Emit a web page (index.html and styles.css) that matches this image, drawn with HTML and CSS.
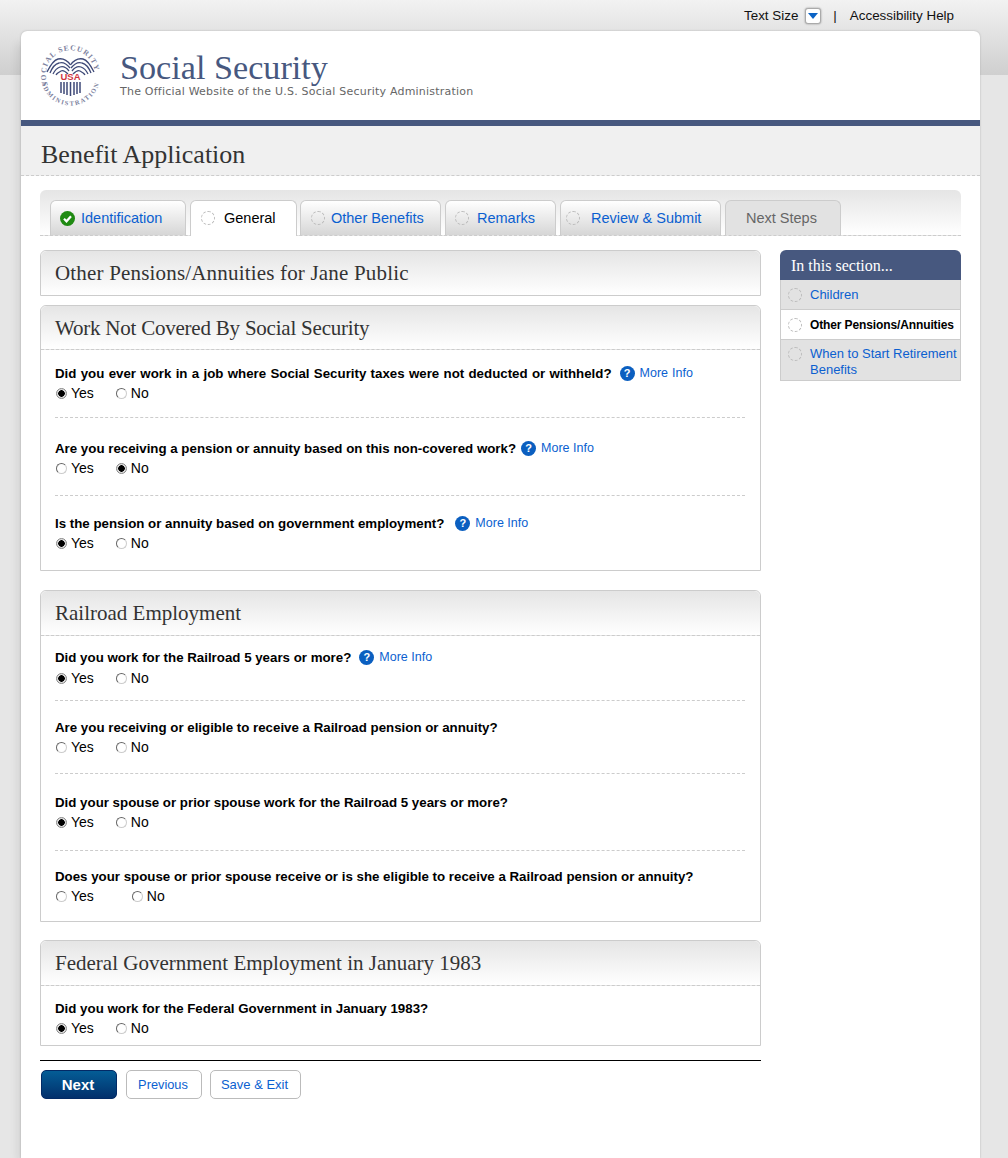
FILE: index.html
```html
<!DOCTYPE html>
<html lang="en" dir="ltr">
  <head>
    <meta charset="utf-8">
    <title>Benefit Application</title>
    <link rel="stylesheet" href="styles.css">
  </head>
  <body>
    <div class="Top-Links">
      <span>Text Size</span>
      <span class="Size-Btn"><svg width="10" height="6" viewBox="0 0 10 6"><path d="M0 0H10L5 6Z" fill="#0b63c5"/></svg></span>
      <span class="Top-Sep">|</span>
      <span>Accessibility Help</span>
    </div>
    <div class="Page-Card">
      <div class="Site-Header">
        <svg class="Site-Logo" width="63" height="63" viewBox="0 0 63 63">
          <defs>
            <path id="LogoTop" d="M9 41A24.6 24.6 0 1 1 56 31"/>
            <path id="LogoBottom" d="M2 32A29.5 29.5 0 0 0 61 32"/>
            <g id="LogoWing" fill="none" stroke="#3f4a78" stroke-width="1.3">
              <path d="M31.5 21C28 16 24 14 19 15C15 16 11 22 8 28"/>
              <path d="M31 24C27 19 23 18 20 19C16 20 13 24 11 29"/>
              <path d="M30 27C27 23 24 22 21 23C18 24 16 26 14 30"/>
              <path d="M29 30C26 27 24 26 22 27C20 28 18 29 17 31"/>
            </g>
          </defs>
          <text class="Logo-Text Logo-Top"><textPath href="#LogoTop">SOCIAL SECURITY</textPath></text>
          <text class="Logo-Text Logo-Bottom"><textPath href="#LogoBottom" startOffset="6">ADMINISTRATION</textPath></text>
          <use href="#LogoWing"/>
          <use href="#LogoWing" transform="translate(63 0) scale(-1 1)"/>
          <text class="Logo-Usa" x="31.5" y="36" text-anchor="middle">USA</text>
          <path d="M22 38V49M25 38V50M28 38V51M31.5 38V52M35 38V51M38 38V50M41 38V49" stroke="#3f4a78" stroke-width="1.5"/>
        </svg>
        <div class="Site-Title">
          <div class="Site-Name">Social Security</div>
          <div class="Site-Tag">The Official Website of the U.S. Social Security Administration</div>
        </div>
      </div>
      <div class="Page-Title">Benefit Application</div>
      <div class="Tab-Bar">
        <a class="Tab Tab-Id"><svg class="Tab-Icon" width="15" height="15" viewBox="0 0 15 15"><circle cx="7.5" cy="7.5" r="7.5" fill="#1f8a12"/><path d="M4 7.8L6.5 10.3L11 5.3" fill="none" stroke="#fff" stroke-width="2.2"/></svg>Identification</a>
        <a class="Tab Tab-Current"><span class="Dash-Circle"></span>General</a>
        <a class="Tab Tab-Benefits"><span class="Dash-Circle"></span>Other Benefits</a>
        <a class="Tab Tab-Remarks"><span class="Dash-Circle"></span>Remarks</a>
        <a class="Tab Tab-Review"><span class="Dash-Circle"></span>Review &amp; Submit</a>
        <a class="Tab Tab-Off">Next Steps</a>
      </div>
      <div class="Page-Body">
        <div class="Main-Col">
          <div class="Panel Panel-Title"><h2>Other Pensions/Annuities for Jane Public</h2></div>

          <div class="Panel Panel-Work">
            <h2>Work Not Covered By Social Security</h2>
            <div class="Question">
              <div class="Q-Text">Did you ever work in a job where Social Security taxes were not deducted or withheld?<span class="Help-Icon Help-Far">?</span><a class="More-Info">More Info</a></div>
              <div class="Q-Radios"><label><input type="radio" name="q1" checked>Yes</label><label><input type="radio" name="q1">No</label></div>
            </div>
            <div class="Question">
              <div class="Q-Text">Are you receiving a pension or annuity based on this non-covered work?<span class="Help-Icon">?</span><a class="More-Info">More Info</a></div>
              <div class="Q-Radios"><label><input type="radio" name="q2">Yes</label><label><input type="radio" name="q2" checked>No</label></div>
            </div>
            <div class="Question">
              <div class="Q-Text">Is the pension or annuity based on government employment?<span class="Help-Icon Help-Wide">?</span><a class="More-Info">More Info</a></div>
              <div class="Q-Radios"><label><input type="radio" name="q3" checked>Yes</label><label><input type="radio" name="q3">No</label></div>
            </div>
          </div>

          <div class="Panel Panel-Rail">
            <h2>Railroad Employment</h2>
            <div class="Question">
              <div class="Q-Text">Did you work for the Railroad 5 years or more?<span class="Help-Icon Help-Far">?</span><a class="More-Info">More Info</a></div>
              <div class="Q-Radios"><label><input type="radio" name="q4" checked>Yes</label><label><input type="radio" name="q4">No</label></div>
            </div>
            <div class="Question">
              <div class="Q-Text">Are you receiving or eligible to receive a Railroad pension or annuity?</div>
              <div class="Q-Radios"><label><input type="radio" name="q5">Yes</label><label><input type="radio" name="q5">No</label></div>
            </div>
            <div class="Question">
              <div class="Q-Text">Did your spouse or prior spouse work for the Railroad 5 years or more?</div>
              <div class="Q-Radios"><label><input type="radio" name="q6" checked>Yes</label><label><input type="radio" name="q6">No</label></div>
            </div>
            <div class="Question">
              <div class="Q-Text">Does your spouse or prior spouse receive or is she eligible to receive a Railroad pension or annuity?</div>
              <div class="Q-Radios Q-Radios-Wide"><label><input type="radio" name="q7">Yes</label><label><input type="radio" name="q7">No</label></div>
            </div>
          </div>

          <div class="Panel Panel-Fed">
            <h2>Federal Government Employment in January 1983</h2>
            <div class="Question">
              <div class="Q-Text">Did you work for the Federal Government in January 1983?</div>
              <div class="Q-Radios"><label><input type="radio" name="q8" checked>Yes</label><label><input type="radio" name="q8">No</label></div>
            </div>
          </div>

          <div class="Btn-Container">
            <a class="Btn Btn-Next">Next</a>
            <a class="Btn Btn-Prev">Previous</a>
            <a class="Btn Btn-Save">Save &amp; Exit</a>
          </div>
        </div>
        <div class="Side-Col">
          <div class="Side-Head">In this section...</div>
          <a class="Side-Item"><span class="Dash-Circle"></span><span>Children</span></a>
          <a class="Side-Item Side-Current"><span class="Dash-Circle"></span><span>Other Pensions/Annuities</span></a>
          <a class="Side-Item Side-Tall"><span class="Dash-Circle"></span><span>When to Start Retirement Benefits</span></a>
        </div>
      </div>
    </div>
  </body>
</html>
```

FILE: styles.css
```css
html {
  height: 100%;
}

body {
  margin: 0;
  padding: 0 28px 0 21px;
  height: 1158px;
  box-sizing: border-box;
  overflow: hidden;
  font-family: 'Liberation Sans', Arial, sans-serif;
  font-size: 14px;
  color: #000;
  background: linear-gradient(#f2f2f2 0, #cfcfcf 75px, #e6e6e6 75px, #e6e6e6 100%);
}

a {
  color: #0b5fd0;
}

.Top-Links {
  display: flex;
  justify-content: flex-end;
  align-items: center;
  height: 31px;
  padding-right: 26px;
  font-size: 13.4px;
  color: #111;
}

.Size-Btn {
  display: flex;
  align-items: center;
  justify-content: center;
  width: 14px;
  height: 14px;
  margin-left: 7px;
  background: #fff;
  border: 1px solid #aaa;
  border-radius: 3px;
  box-shadow: 0 0 2px #888;
}

.Top-Sep {
  margin: 0 13px 0 12px;
}

.Page-Card {
  height: 1127px;
  background: #fff;
  border-radius: 6px 6px 0 0;
  box-shadow: -8px 8px 8px -4px rgba(0, 0, 0, 0.08), 0 0 2px #aaa;
}

.Site-Header {
  display: flex;
  height: 89px;
  box-sizing: border-box;
  padding: 13px 0 0 18px;
}

.Site-Logo {
  flex: none;
  overflow: visible;
}

.Logo-Text {
  font-family: 'Liberation Serif', serif;
  font-weight: bold;
  fill: #7d82a0;
}

.Logo-Top {
  font-size: 7.5px;
  letter-spacing: 1px;
}

.Logo-Bottom {
  font-size: 6.5px;
  letter-spacing: 1.5px;
}

.Logo-Usa {
  font-family: 'Liberation Sans', sans-serif;
  font-weight: bold;
  font-size: 9.5px;
  fill: #d0343f;
}

.Site-Title {
  margin-left: 18px;
}

.Site-Name {
  font-family: 'Liberation Serif', serif;
  font-size: 34.2px;
  line-height: 34px;
  margin-top: 7px;
  color: #47587f;
}

.Site-Tag {
  font-family: 'DejaVu Sans', sans-serif;
  font-size: 11px;
  line-height: 12px;
  margin-top: 1px;
  letter-spacing: 0.22px;
  color: #666;
}

.Page-Title {
  height: 56px;
  box-sizing: border-box;
  padding: 14px 0 0 20px;
  border-top: 6px solid #47587f;
  border-bottom: 1px dashed #ccc;
  background: #f0f0f0;
  font-family: 'Liberation Serif', serif;
  font-size: 26px;
  line-height: 30px;
  color: #333;
}

.Tab-Bar {
  display: flex;
  gap: 4px;
  height: 46px;
  box-sizing: border-box;
  margin: 14px 19px 0 19px;
  padding: 10px 0 0 10px;
  border-bottom: 1px dashed #ccc;
  border-radius: 6px 6px 0 0;
  background: linear-gradient(#e5e5e5, #fff);
}

.Tab {
  display: flex;
  align-items: center;
  height: 35px;
  box-sizing: border-box;
  border: 1px solid #ccc;
  border-bottom: 0;
  border-radius: 6px 6px 0 0;
  background: linear-gradient(#fff, #d6d6d6);
  font-size: 14.5px;
  color: #0b5fd0;
}

.Tab-Icon {
  margin-right: 6px;
}

.Dash-Circle {
  flex: none;
  display: block;
  width: 12px;
  height: 12px;
  border: 1px dashed #bbb;
  border-radius: 50%;
}

.Tab-Id {
  width: 136px;
  padding-left: 9px;
}

.Tab-Current {
  width: 107px;
  height: 36px;
  margin-right: -1px;
  padding: 0 0 1px 10px;
  background: #fff;
  color: #000;
}

.Tab-Current .Dash-Circle {
  margin-right: 9px;
}

.Tab-Benefits {
  width: 141px;
  padding-left: 10px;
}

.Tab-Benefits .Dash-Circle {
  margin-right: 6px;
}

.Tab-Remarks {
  width: 111px;
  padding-left: 9px;
}

.Tab-Remarks .Dash-Circle {
  margin-right: 8px;
}

.Tab-Review {
  width: 161px;
  padding-left: 5px;
}

.Tab-Review .Dash-Circle {
  margin-right: 11px;
}

.Tab-Off {
  width: 116px;
  padding-left: 20px;
  background: #e2e2e2;
  color: #666;
}

.Page-Body {
  display: flex;
  margin: 14px 19px 0 19px;
}

.Main-Col {
  width: 721px;
}

.Panel {
  box-sizing: border-box;
  margin-bottom: 19px;
  padding-bottom: 1px;
  border: 1px solid #ccc;
  border-radius: 6px 6px 0 0;
}

.Panel h2 {
  margin: 0;
  height: 44px;
  box-sizing: border-box;
  padding: 11px 0 0 14px;
  border-bottom: 1px dashed #ccc;
  border-radius: 6px 6px 0 0;
  background: linear-gradient(#e5e5e5, #fff);
  font-family: 'Liberation Serif', serif;
  font-weight: normal;
  font-size: 21px;
  line-height: 22px;
  color: #333;
}

.Panel-Title {
  margin-bottom: 9px;
  height: 46px;
}

.Panel-Title h2 {
  border-bottom: 0;
  letter-spacing: 0.18px;
}

.Panel-Work h2 {
  letter-spacing: -0.22px;
}

.Panel-Rail h2,
.Panel-Fed h2 {
  height: 45px;
}

.Question {
  margin: 0 15px 0 14px;
  border-bottom: 1px dashed #ccc;
}

.Question:last-child {
  border-bottom: 0;
}

.Q-Text {
  display: flex;
  align-items: center;
  height: 20px;
  font-weight: bold;
  font-size: 13.3px;
}

.Help-Icon {
  display: flex;
  align-items: center;
  justify-content: center;
  width: 15px;
  height: 15px;
  margin: 0 5px 0 5px;
  border-radius: 50%;
  background: #0b5fc0;
  color: #fff;
  font-size: 11px;
  font-weight: bold;
}

.Help-Far {
  margin-left: 8px;
}

.Help-Wide {
  margin-left: 11px;
}

.More-Info {
  font-weight: normal;
  font-size: 12.5px;
}

.Q-Radios {
  display: flex;
  align-items: center;
  height: 20px;
  gap: 21px;
}

.Q-Radios-Wide {
  gap: 37px;
}

.Q-Radios label {
  display: flex;
  align-items: center;
}

.Q-Radios input {
  appearance: none;
  width: 11px;
  height: 11px;
  margin: 0 4px 0 1px;
  border: 1px solid;
  border-color: #666 #ccc #ccc #666;
  border-radius: 50%;
  background: #fff;
}

.Q-Radios input:checked {
  border-color: #888;
  background: radial-gradient(circle, #000 0, #000 3px, #ddd 3.5px);
}

.Panel-Work {
  margin-bottom: 19px;
}

.Panel-Work .Question:nth-of-type(1) { padding: 13px 0 14px 0; }
.Panel-Work .Question:nth-of-type(1) .Q-Text { word-spacing: 0.6px; }
.Panel-Work .Question:nth-of-type(2) { padding: 20px 0 17px 0; }
.Panel-Work .Question:nth-of-type(3) { padding: 17px 0 16px 0; }

.Panel-Rail {
  margin-bottom: 18px;
}

.Panel-Rail .Question:nth-of-type(1) { padding: 11px 0 12px 0; }
.Panel-Rail .Question:nth-of-type(1) .Q-Text { margin-bottom: 1px; }
.Panel-Rail .Question:nth-of-type(2) { padding: 16px 0 16px 0; }
.Panel-Rail .Question:nth-of-type(3) { padding: 18px 0 18px 0; }
.Panel-Rail .Question:nth-of-type(4) { padding: 15px 0 14px 0; }

.Panel-Fed {
  margin-bottom: 14px;
}

.Panel-Fed .Question { padding: 12px 0 6px 0; }

.Btn-Container {
  display: flex;
  gap: 8px;
  padding-top: 9px;
  border-top: 1px solid #000;
}

.Btn {
  display: flex;
  align-items: center;
  justify-content: center;
  height: 29px;
  box-sizing: border-box;
  padding-bottom: 1px;
  border: 1px solid #bbb;
  border-radius: 5px;
  font-size: 13px;
  color: #0b5fd0;
}

.Btn-Next {
  width: 76px;
  margin-left: 1px;
  padding-right: 2px;
  border-color: #022a66;
  background: linear-gradient(#045d96, #02306c);
  color: #fff;
  font-weight: bold;
  font-size: 15px;
}

.Btn-Prev {
  width: 76px;
  margin-left: 1px;
  padding-right: 2px;
  font-size: 12.8px;
}

.Btn-Save {
  width: 91px;
  padding-right: 2px;
}

.Side-Col {
  width: 181px;
  margin-left: 19px;
}

.Side-Head {
  height: 30px;
  box-sizing: border-box;
  padding: 7px 0 0 11px;
  border-radius: 6px 6px 0 0;
  background: #47587f;
  font-family: 'Liberation Serif', serif;
  font-size: 16px;
  line-height: 17px;
  color: #fff;
}

.Side-Item {
  display: flex;
  align-items: center;
  gap: 8px;
  height: 30px;
  box-sizing: border-box;
  padding: 1px 0 0 7px;
  border: 1px solid #ccc;
  border-top: 0;
  background: #e2e2e2;
  font-size: 13px;
  line-height: 16px;
}

.Side-Current {
  background: #fff;
  color: #000;
  font-weight: bold;
  font-size: 12px;
  letter-spacing: -0.12px;
}

.Side-Tall {
  height: 41px;
  align-items: flex-start;
  padding-top: 6px;
}

.Side-Tall .Dash-Circle {
  margin-top: 1px;
}
```
